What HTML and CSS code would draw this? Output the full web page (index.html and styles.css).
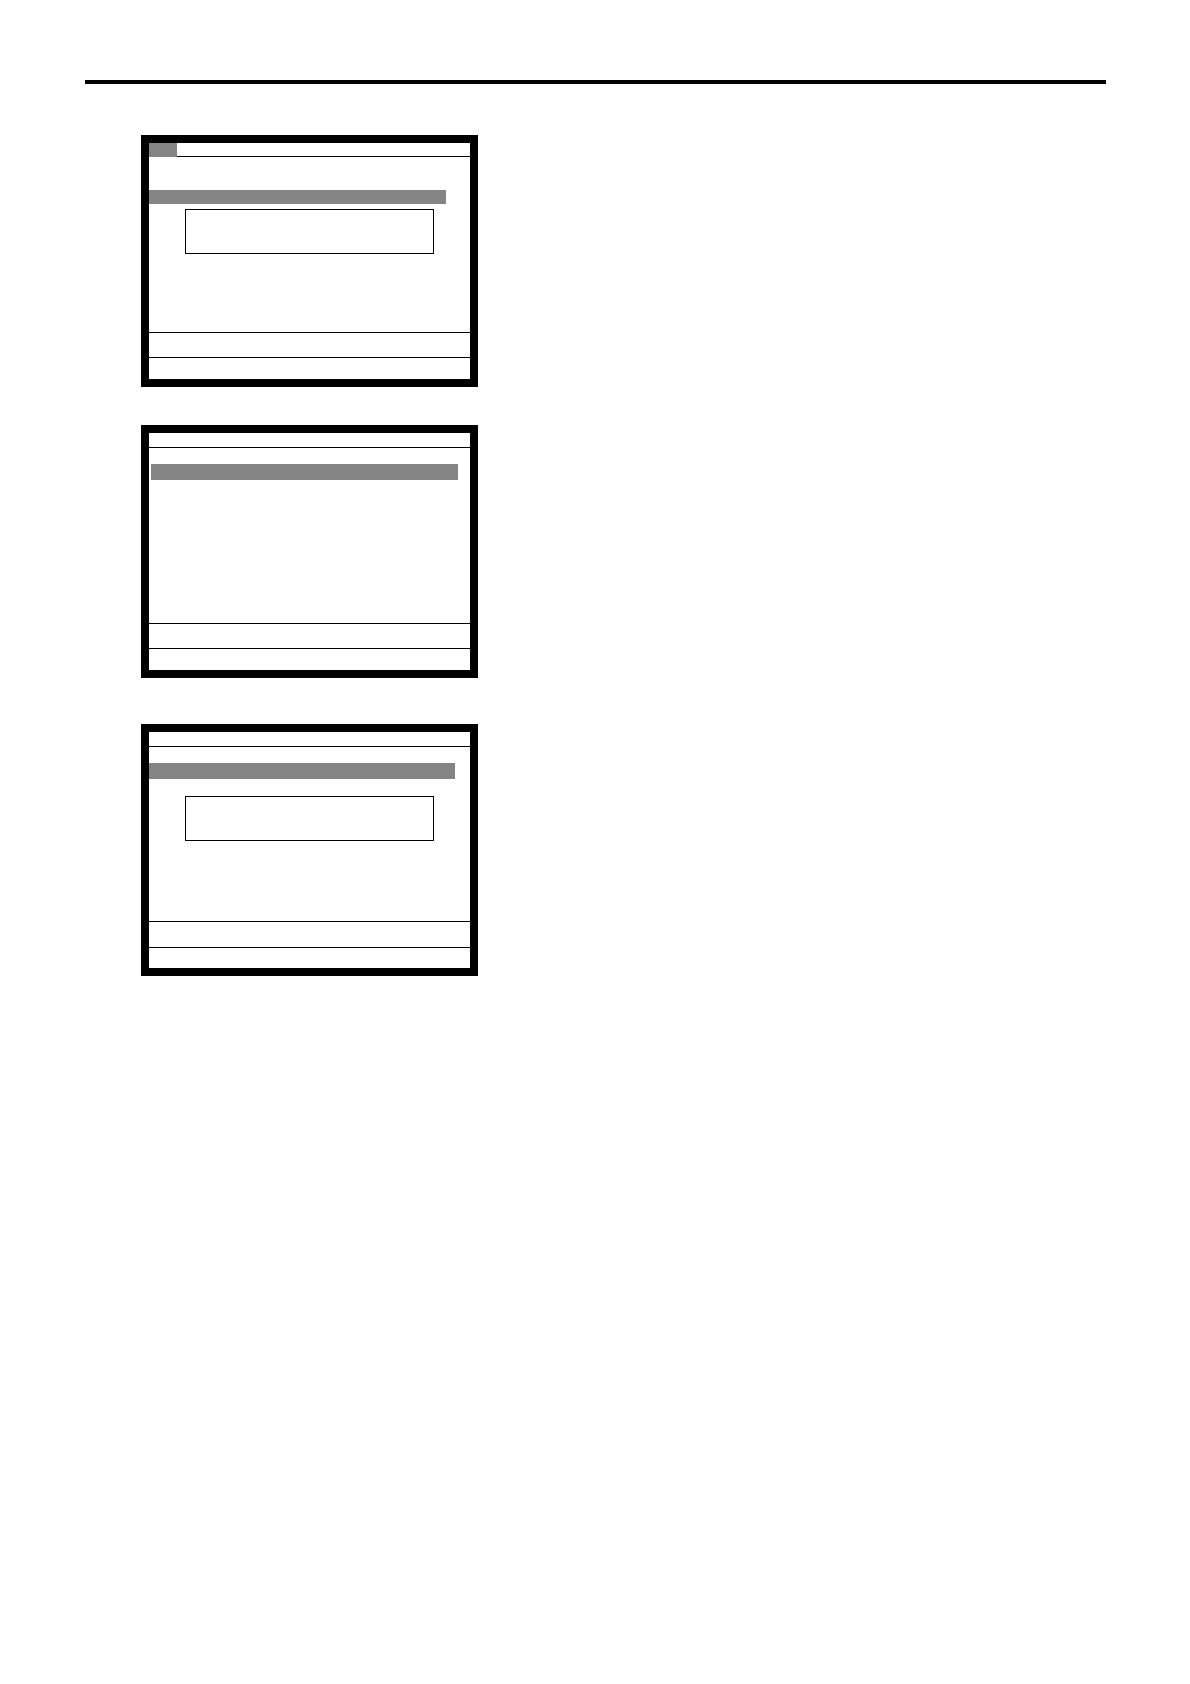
FILE: index.html
```html
<!DOCTYPE html>
<html>
<head>
<meta charset="utf-8">
<link rel="stylesheet" href="styles.css">
</head>
<body>
<div class="page">
  <div class="rule"></div>

  <div class="screen s1">
    <div class="head"><div class="tab"></div></div>
    <div class="main">
      <div class="bar"></div>
      <div class="field"></div>
    </div>
    <div class="foot f1"></div>
    <div class="foot f2"></div>
  </div>

  <div class="screen s2">
    <div class="head"></div>
    <div class="main">
      <div class="bar"></div>
    </div>
    <div class="foot f1"></div>
    <div class="foot f2"></div>
  </div>

  <div class="screen s3">
    <div class="head"></div>
    <div class="main">
      <div class="bar"></div>
      <div class="field"></div>
    </div>
    <div class="foot f1"></div>
    <div class="foot f2"></div>
  </div>
</div>
</body>
</html>
```

FILE: styles.css
```css
html, body {
  margin: 0;
  padding: 0;
  background: #ffffff;
  font-family: "Liberation Sans", Arial, sans-serif;
}

.page {
  width: 1190px;
  height: 1684px;
  display: flex;
  flex-direction: column;
  align-items: flex-start;
}

.rule {
  margin-top: 80px;
  margin-left: 85px;
  width: 1021px;
  height: 4px;
  background: #000;
}

.screen {
  margin-left: 141px;
  width: 321px;
  border: 8px solid #000;
  display: flex;
  flex-direction: column;
  background: #fff;
}

.s1 { margin-top: 51px; }
.s2 { margin-top: 38px; }
.s3 { margin-top: 46px; }

.head {
  height: 13px;
  border-bottom: 1px solid #000;
  display: flex;
}
.s2 .head, .s3 .head { height: 14px; }

.tab {
  width: 28px;
  height: 14px;
  background: #848484;
}

.main {
  height: 175px;
  display: flex;
  flex-direction: column;
  align-items: flex-start;
}
.s3 .main { height: 174px; }

.bar {
  background: #848484;
}
.s1 .bar { margin-top: 33px; width: 297px; height: 14px; }
.s2 .bar { margin-top: 16px; margin-left: 2px; width: 307px; height: 16px; }
.s3 .bar { margin-top: 16px; width: 306px; height: 16px; }

.field {
  margin-left: 36px;
  width: 247px;
  height: 43px;
  border: 1px solid #000;
}
.s1 .field { margin-top: 5px; }
.s3 .field { margin-top: 17px; }

.foot {
  border-top: 1px solid #000;
}
.f1 { height: 24px; }
.f2 { height: 21px; }
.s3 .f1 { height: 25px; }
.s3 .f2 { height: 20px; }
```
